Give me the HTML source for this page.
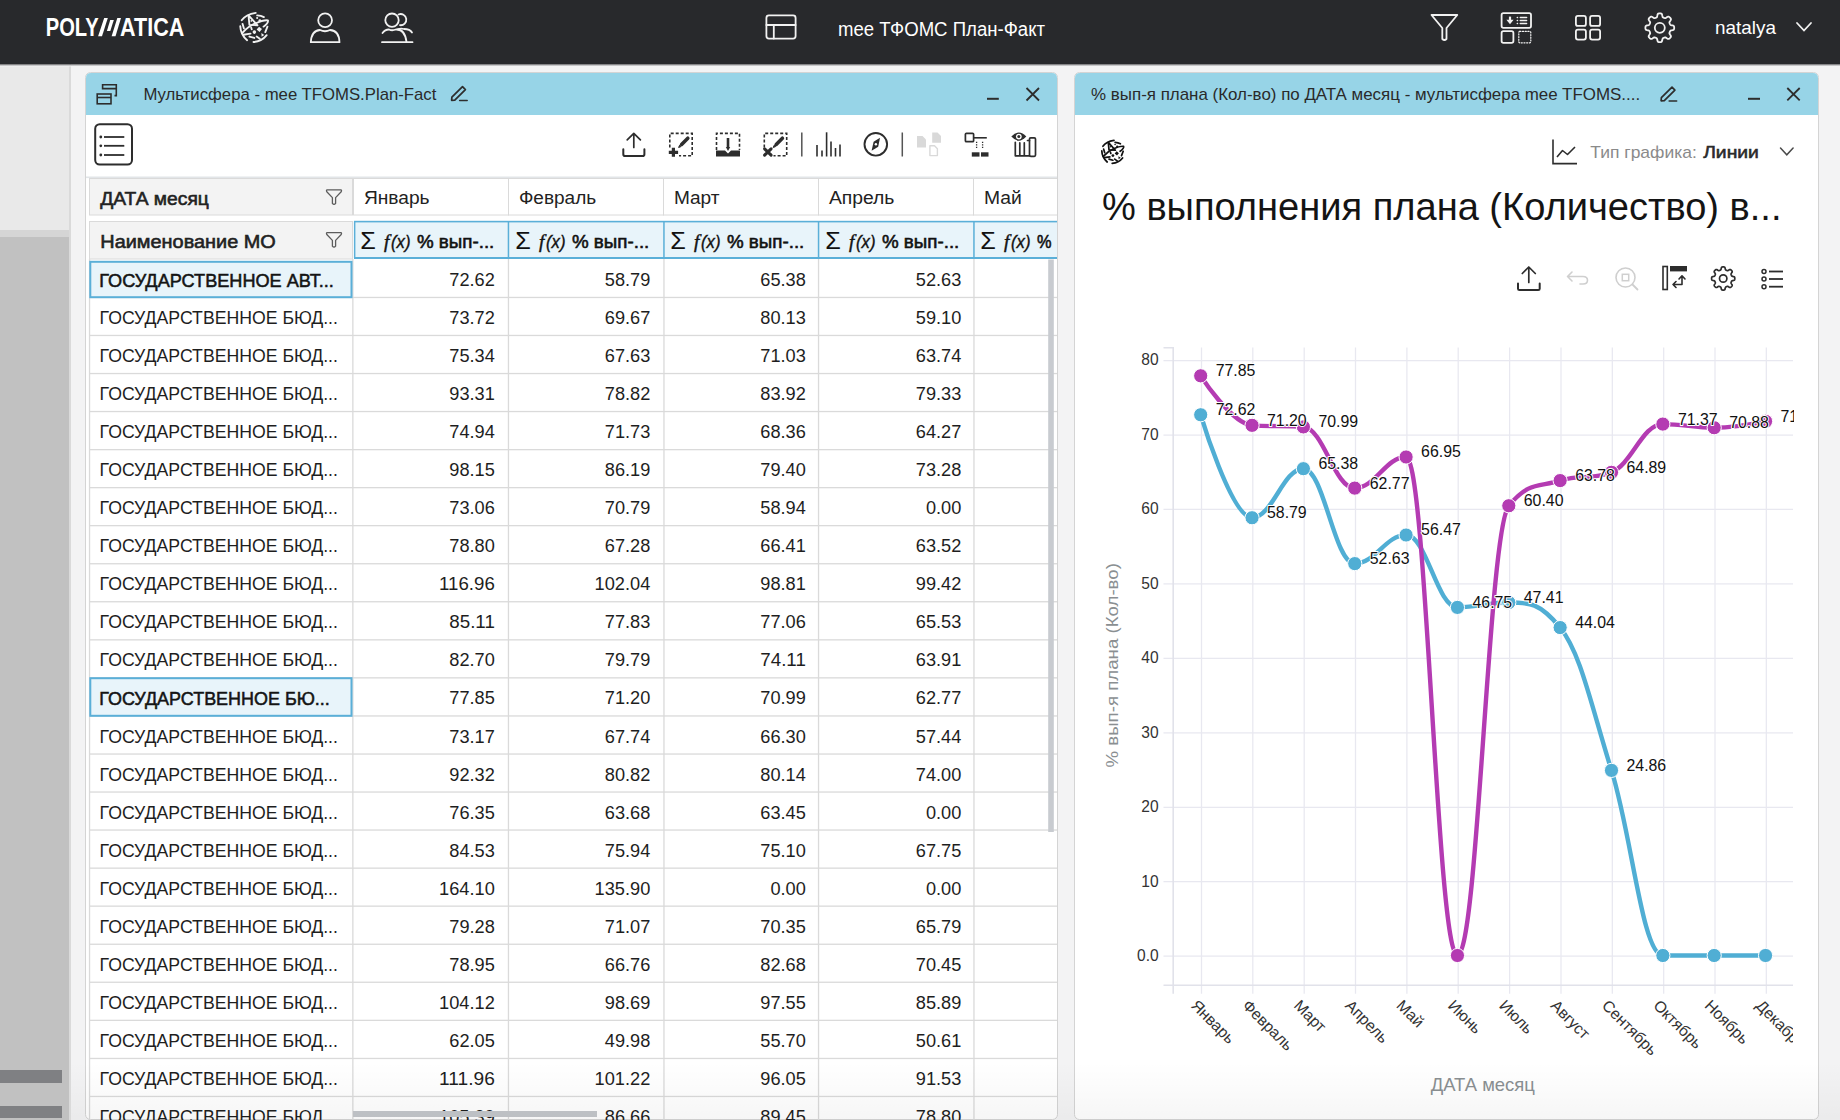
<!DOCTYPE html>
<html><head><meta charset="utf-8"><title>Polymatica</title>
<style>
html,body{margin:0;padding:0;width:1840px;height:1120px;overflow:hidden;background:#f3f3f4;}
svg{display:block;font-family:"Liberation Sans", sans-serif;}
</style></head><body>
<svg width="1840" height="1120" viewBox="0 0 1840 1120">
<defs>
<linearGradient id="topshadow" x1="0" y1="0" x2="0" y2="1"><stop offset="0" stop-color="#9a9a9c"/><stop offset="1" stop-color="#f3f3f4"/></linearGradient>
<linearGradient id="botfade" x1="0" y1="0" x2="0" y2="1"><stop offset="0" stop-color="#000" stop-opacity="0"/><stop offset="1" stop-color="#000" stop-opacity="0.035"/></linearGradient>
<clipPath id="plotclip"><rect x="1163" y="340" width="631" height="660"/></clipPath>
<clipPath id="tableclip"><rect x="86" y="170" width="971" height="100"/></clipPath>
<clipPath id="xlabclip"><rect x="1100" y="990" width="693" height="80"/></clipPath>
</defs>
<rect x="0" y="0" width="1840" height="1120" fill="#f3f3f4"/>
<rect x="0" y="64" width="69" height="166" fill="#e9e9e9"/>
<rect x="0" y="230" width="69" height="7" fill="#d5d5d5"/>
<rect x="0" y="237" width="69" height="883" fill="#c1c1c1"/>
<rect x="69" y="64" width="2" height="1056" fill="#dadada"/>
<rect x="0" y="1070" width="62" height="13" fill="#7f8083"/>
<rect x="0" y="1106" width="62" height="12" fill="#7f8083"/>
<rect x="85.5" y="72.5" width="972" height="1047" rx="5" fill="#ffffff" stroke="#d4d4d4" stroke-width="1"/>
<path d="M86,115 L86,78 Q86,73 91,73 L1052,73 Q1057,73 1057,78 L1057,115 Z" fill="#97d4e7"/>
<rect x="1074.5" y="72.5" width="744" height="1047" rx="5" fill="#ffffff" stroke="#d4d4d4" stroke-width="1"/>
<path d="M1075,115 L1075,78 Q1075,73 1080,73 L1813,73 Q1818,73 1818,78 L1818,115 Z" fill="#97d4e7"/>
<rect x="0" y="0" width="1840" height="64.6" fill="#28292c"/>
<rect x="0" y="64.6" width="1840" height="1.8" fill="url(#topshadow)"/>
<g fill="#ffffff">
<text x="45.7" y="36.3" font-size="26.6" fill="#ffffff" font-weight="bold" text-anchor="start" textLength="53.0" lengthAdjust="spacingAndGlyphs" >POLY</text>
<polygon points="98.1,36.3 102,36.3 107.8,18.1 104.2,18.1"/>
<polygon points="106.9,31 110.3,31 113.8,20 110.2,20"/>
<polygon points="111.6,36.3 115.5,36.3 121,18.1 117.3,18.1"/>
<text x="120.1" y="36.3" font-size="26.6" fill="#ffffff" font-weight="bold" text-anchor="start" textLength="64.2" lengthAdjust="spacingAndGlyphs" >ATICA</text>
</g>
<g transform="translate(239.5,12.3) scale(1.27)" stroke="#f2f2f2" fill="none" stroke-width="1.45" stroke-linecap="round" stroke-linejoin="round">
<path d="M1.7,6.3 Q5,1.5 12.8,0.4 M13.9,2.4 Q17,2.6 19.2,3.8 M0.6,10.9 Q0.8,17.5 6,22 M11,23.4 Q17.5,23 21.4,18 M22,11.3 L20.3,15.6"/>
<path d="M2.1,16.3 Q7,11 12.4,8.8 Q19,5.8 22.4,6.3 Q23,8.5 18.9,11.3"/>
<path d="M7.1,2.4 L14.2,10.2 L7.8,9.9 Z"/>
<path d="M3.1,17.7 L8.7,16.8 M2.4,9.1 L3.5,12.7 M7.8,19.1 L11.7,20.2 M13.5,19.1 L16,20.9 M9.2,12 L9.6,13.4"/>
</g>
<g transform="translate(239.5,12.3) scale(1.27)" fill="#f2f2f2">
<rect x="14.1" y="11.9" width="3" height="3" transform="rotate(40 15.6 13.4)"/>
<circle cx="11.7" cy="15.6" r="1.4"/><path d="M17.2,16.3 L19.5,17.8 L17.4,19.2 Z"/>
<circle cx="13.9" cy="4.5" r="0.8"/><circle cx="16" cy="6.6" r="1.1"/><circle cx="9.3" cy="6.8" r="0.7"/>
</g>
<g stroke="#f2f2f2" fill="none" stroke-width="1.8" stroke-linecap="round" stroke-linejoin="round">
<circle cx="325.1" cy="20.2" r="6.9"/>
<path d="M310.8,42.2 Q311.5,30.5 320,30 Q325,32.5 330,30 Q339,30.5 339.5,42.2 Z"/>
<circle cx="392" cy="20.2" r="6.7"/>
<path d="M398.5,14.5 A5.6,5.6 0 1 1 400,25.2"/>
<path d="M382.5,33 Q385,29.5 389,29.5 Q392,31 396,29.5 Q405,29 406.5,42"/>
<path d="M398,29.2 Q401,28 404,29 Q410,29 412,32.5"/>
<path d="M382,42.2 L412.5,42.2"/>
</g>
<g stroke="#f2f2f2" fill="none" stroke-width="1.8" stroke-linecap="round" stroke-linejoin="round">
<rect x="766.4" y="15.4" width="29.2" height="23.2" rx="2.5"/>
<path d="M766.4,25 L795.6,25 M773.8,25 L773.8,38.6"/>
</g>
<text x="838.0" y="35.7" font-size="20" fill="#ffffff" font-weight="normal" text-anchor="start" textLength="207.0" lengthAdjust="spacingAndGlyphs" >mee ТФОМС План-Факт</text>
<g stroke="#f2f2f2" fill="none" stroke-width="1.8" stroke-linecap="round" stroke-linejoin="round">
<path d="M1431.5,15 L1457.3,15 L1446.5,28 L1446.5,39 Q1444.4,41 1442.3,39 L1442.3,28 Z"/>
<rect x="1501.6" y="13.2" width="29.4" height="14.6" rx="1.8"/>
<rect x="1501.6" y="31.2" width="11.8" height="11.6" rx="1.8"/>
<rect x="1518.8" y="31.4" width="12" height="11.4" rx="1" stroke-width="1.2" stroke-dasharray="1.1 1.6"/>
<path d="M1520.3,17.6 L1526.6,17.6 M1520.3,20.6 L1526.6,20.6 M1520.3,23.6 L1526.6,23.6" stroke-width="1.5"/><path d="M1517.3,17.6 L1517.5,17.6 M1517.3,20.6 L1517.5,20.6 M1517.3,23.6 L1517.5,23.6" stroke-width="1.5"/>
<rect x="1575.9" y="15.9" width="10" height="10" rx="2"/>
<rect x="1590.1" y="15.9" width="10" height="10" rx="2"/>
<rect x="1575.9" y="29.6" width="10" height="10" rx="2"/>
<rect x="1590.1" y="29.6" width="10" height="10" rx="2"/>
</g>
<path d="M1510,16.6 L1510,20.5" stroke="#f2f2f2" stroke-width="2.2"/><path d="M1506.4,19.8 L1513.6,19.8 L1510,24.2 Z" fill="#f2f2f2"/>
<path d="M1659.80,13.40 L1660.18,13.41 L1660.55,13.44 L1660.93,13.50 L1661.29,13.62 L1661.64,13.84 L1661.94,14.28 L1662.17,15.00 L1662.33,15.88 L1662.49,16.61 L1662.68,17.06 L1662.91,17.31 L1663.16,17.47 L1663.41,17.60 L1663.67,17.71 L1663.93,17.82 L1664.19,17.93 L1664.46,18.03 L1664.73,18.13 L1665.02,18.19 L1665.36,18.17 L1665.81,17.99 L1666.44,17.58 L1667.17,17.07 L1667.85,16.72 L1668.37,16.63 L1668.77,16.72 L1669.11,16.89 L1669.42,17.11 L1669.71,17.36 L1669.98,17.62 L1670.24,17.89 L1670.49,18.18 L1670.71,18.49 L1670.88,18.83 L1670.97,19.23 L1670.88,19.75 L1670.53,20.43 L1670.02,21.16 L1669.61,21.79 L1669.43,22.24 L1669.41,22.58 L1669.47,22.87 L1669.57,23.14 L1669.67,23.41 L1669.78,23.67 L1669.89,23.93 L1670.00,24.19 L1670.13,24.44 L1670.29,24.69 L1670.54,24.92 L1670.99,25.11 L1671.72,25.27 L1672.60,25.43 L1673.32,25.66 L1673.76,25.96 L1673.98,26.31 L1674.10,26.67 L1674.16,27.05 L1674.19,27.42 L1674.20,27.80 L1674.19,28.18 L1674.16,28.55 L1674.10,28.93 L1673.98,29.29 L1673.76,29.64 L1673.32,29.94 L1672.60,30.17 L1671.72,30.33 L1670.99,30.49 L1670.54,30.68 L1670.29,30.91 L1670.13,31.16 L1670.00,31.41 L1669.89,31.67 L1669.78,31.93 L1669.67,32.19 L1669.57,32.46 L1669.47,32.73 L1669.41,33.02 L1669.43,33.36 L1669.61,33.81 L1670.02,34.44 L1670.53,35.17 L1670.88,35.85 L1670.97,36.37 L1670.88,36.77 L1670.71,37.11 L1670.49,37.42 L1670.24,37.71 L1669.98,37.98 L1669.71,38.24 L1669.42,38.49 L1669.11,38.71 L1668.77,38.88 L1668.37,38.97 L1667.85,38.88 L1667.17,38.53 L1666.44,38.02 L1665.81,37.61 L1665.36,37.43 L1665.02,37.41 L1664.73,37.47 L1664.46,37.57 L1664.19,37.67 L1663.93,37.78 L1663.67,37.89 L1663.41,38.00 L1663.16,38.13 L1662.91,38.29 L1662.68,38.54 L1662.49,38.99 L1662.33,39.72 L1662.17,40.60 L1661.94,41.32 L1661.64,41.76 L1661.29,41.98 L1660.93,42.10 L1660.55,42.16 L1660.18,42.19 L1659.80,42.20 L1659.42,42.19 L1659.05,42.16 L1658.67,42.10 L1658.31,41.98 L1657.96,41.76 L1657.66,41.32 L1657.43,40.60 L1657.27,39.72 L1657.11,38.99 L1656.92,38.54 L1656.69,38.29 L1656.44,38.13 L1656.19,38.00 L1655.93,37.89 L1655.67,37.78 L1655.41,37.67 L1655.14,37.57 L1654.87,37.47 L1654.58,37.41 L1654.24,37.43 L1653.79,37.61 L1653.16,38.02 L1652.43,38.53 L1651.75,38.88 L1651.23,38.97 L1650.83,38.88 L1650.49,38.71 L1650.18,38.49 L1649.89,38.24 L1649.62,37.98 L1649.36,37.71 L1649.11,37.42 L1648.89,37.11 L1648.72,36.77 L1648.63,36.37 L1648.72,35.85 L1649.07,35.17 L1649.58,34.44 L1649.99,33.81 L1650.17,33.36 L1650.19,33.02 L1650.13,32.73 L1650.03,32.46 L1649.93,32.19 L1649.82,31.93 L1649.71,31.67 L1649.60,31.41 L1649.47,31.16 L1649.31,30.91 L1649.06,30.68 L1648.61,30.49 L1647.88,30.33 L1647.00,30.17 L1646.28,29.94 L1645.84,29.64 L1645.62,29.29 L1645.50,28.93 L1645.44,28.55 L1645.41,28.18 L1645.40,27.80 L1645.41,27.42 L1645.44,27.05 L1645.50,26.67 L1645.62,26.31 L1645.84,25.96 L1646.28,25.66 L1647.00,25.43 L1647.88,25.27 L1648.61,25.11 L1649.06,24.92 L1649.31,24.69 L1649.47,24.44 L1649.60,24.19 L1649.71,23.93 L1649.82,23.67 L1649.93,23.41 L1650.03,23.14 L1650.13,22.87 L1650.19,22.58 L1650.17,22.24 L1649.99,21.79 L1649.58,21.16 L1649.07,20.43 L1648.72,19.75 L1648.63,19.23 L1648.72,18.83 L1648.89,18.49 L1649.11,18.18 L1649.36,17.89 L1649.62,17.62 L1649.89,17.36 L1650.18,17.11 L1650.49,16.89 L1650.83,16.72 L1651.23,16.63 L1651.75,16.72 L1652.43,17.07 L1653.16,17.58 L1653.79,17.99 L1654.24,18.17 L1654.58,18.19 L1654.87,18.13 L1655.14,18.03 L1655.41,17.93 L1655.67,17.82 L1655.93,17.71 L1656.19,17.60 L1656.44,17.47 L1656.69,17.31 L1656.92,17.06 L1657.11,16.61 L1657.27,15.88 L1657.43,15.00 L1657.66,14.28 L1657.96,13.84 L1658.31,13.62 L1658.67,13.50 L1659.05,13.44 L1659.42,13.41 Z" stroke="#f2f2f2" stroke-width="1.8" fill="none" stroke-linejoin="round"/>
<circle cx="1659.8" cy="27.8" r="5" stroke="#f2f2f2" stroke-width="1.8" fill="none"/>
<text x="1715.0" y="33.8" font-size="19" fill="#ffffff" font-weight="normal" text-anchor="start" textLength="61.0" lengthAdjust="spacingAndGlyphs" >natalya</text>
<path d="M1797,23 L1804,30.5 L1811,23" stroke="#f2f2f2" stroke-width="1.8" fill="none" stroke-linecap="round"/>
<g stroke="#2d2d2d" stroke-width="1.6" fill="none">
<path d="M102.6,89.6 L102.6,84.7 L116.3,84.7 L116.3,95.6 L114.5,95.6 M102.6,88.6 L116.3,88.6"/>
<rect x="97.2" y="94" width="13.8" height="9.8"/>
<path d="M97.2,97.5 L111,97.5"/>
</g>
<text x="143.4" y="100.2" font-size="17" fill="#2a2a2a" font-weight="normal" text-anchor="start" textLength="293.0" lengthAdjust="spacingAndGlyphs" >Мультисфера - mee TFOMS.Plan-Fact</text>
<g transform="translate(451,86.5)" stroke="#2d2d2d" stroke-width="1.5" fill="none" stroke-linejoin="round" stroke-linecap="round">
<path d="M0.9,10.6 L11.5,0.2 L14.4,3.1 L3.8,13.6 L0.6,13.8 Z" stroke-width="1.7"/>
<path d="M8.6,13.9 L16.2,13.9" stroke-width="1.5"/>
</g>
<path d="M987,98.8 L998.8,98.8" stroke="#2d2d2d" stroke-width="2"/>
<path d="M1026.5,88 L1039,100.5 M1039,88 L1026.5,100.5" stroke="#2d2d2d" stroke-width="1.8"/>
<rect x="95.2" y="124.2" width="36.8" height="40.3" rx="4.5" stroke="#2d2d2d" stroke-width="2" fill="none"/>
<circle cx="100.8" cy="137" r="1.4" fill="#2d2d2d"/>
<path d="M104,137 L124.3,137" stroke="#2d2d2d" stroke-width="1.8"/>
<circle cx="100.8" cy="145.8" r="1.4" fill="#2d2d2d"/>
<path d="M104,145.8 L124.3,145.8" stroke="#2d2d2d" stroke-width="1.8"/>
<circle cx="100.8" cy="155" r="1.4" fill="#2d2d2d"/>
<path d="M104,155 L124.3,155" stroke="#2d2d2d" stroke-width="1.8"/>
<path d="M633.8,133.5 L633.8,147.5 M627.2,139.8 L633.8,133.3 L640.4,139.8" stroke="#2d2d2d" stroke-width="1.7" fill="none" stroke-linecap="round" stroke-linejoin="round"/>
<path d="M623.3,149.2 L623.3,154.2 Q623.3,156 625,156 L642.7,156 Q644.4,156 644.4,154.2 L644.4,149.2" stroke="#2d2d2d" stroke-width="2" fill="none" stroke-linecap="round"/>
<path d="M669.8,147.5 L669.8,133.4 L692.2,133.4 L692.2,155.8 L679,155.8" stroke="#2d2d2d" stroke-width="1.6" fill="none" stroke-dasharray="3 2"/>
<path d="M673.4,147.7 L673.4,156.8 M668.8,152.3 L678.1,152.3" stroke="#2d2d2d" stroke-width="3.2"/>
<path d="M687.8,138.2 L681.6,144.4" stroke="#2d2d2d" stroke-width="3.6" stroke-linecap="round"/>
<path d="M679.6,145.2 L678.6,147.5 L681,146.6 Z" fill="#2d2d2d" stroke="#2d2d2d" stroke-width="1"/>
<path d="M716.5,150 L716.5,133.4 L739.5,133.4 L739.5,150" stroke="#2d2d2d" stroke-width="1.6" fill="none" stroke-dasharray="3 2"/>
<path d="M716,150.5 L725,150.5 L728,153.5 L731,150.5 L740,150.5 L740,156.6 L716,156.6 Z" fill="#2d2d2d"/>
<path d="M728,138 L728,147" stroke="#2d2d2d" stroke-width="2.6"/>
<path d="M725.8,147 L730.2,147 L728,151 Z" fill="#2d2d2d"/>
<path d="M764.3,147.5 L764.3,133.4 L786.7,133.4 L786.7,155.8 L773.5,155.8" stroke="#2d2d2d" stroke-width="1.6" fill="none" stroke-dasharray="3 2"/>
<path d="M764.6,148.9 L771.1,155.2 M771.1,148.9 L764.6,155.2" stroke="#2d2d2d" stroke-width="3.1" stroke-linecap="round"/>
<path d="M782.4,138.2 L776.2,144.4" stroke="#2d2d2d" stroke-width="3.6" stroke-linecap="round"/>
<path d="M774.2,145.2 L773.2,147.5 L775.6,146.6 Z" fill="#2d2d2d" stroke="#2d2d2d" stroke-width="1"/>
<path d="M801.8,132.5 L801.8,156.5 M902.3,132.5 L902.3,156.5" stroke="#555" stroke-width="1.5"/>
<path d="M817,145 L817,156.5" stroke="#2d2d2d" stroke-width="1.6"/>
<path d="M822,150.5 L822,156.5" stroke="#2d2d2d" stroke-width="1.6"/>
<path d="M826.6,132.3 L826.6,156.5" stroke="#2d2d2d" stroke-width="1.6"/>
<path d="M831,141.5 L831,156.5" stroke="#2d2d2d" stroke-width="1.6"/>
<path d="M835.5,148 L835.5,156.5" stroke="#2d2d2d" stroke-width="1.6"/>
<path d="M840,144.5 L840,156.5" stroke="#2d2d2d" stroke-width="1.6"/>
<circle cx="875.8" cy="144.3" r="11.3" stroke="#2d2d2d" stroke-width="1.9" fill="none"/>
<path d="M880,137.8 L878.2,146.8 L871.6,150.8 L873.6,141.8 Z" fill="#2d2d2d"/>
<circle cx="875.9" cy="144.3" r="1.2" fill="#fff"/>
<path d="M917,136 L922.5,136 L926,139.5 L926,147.4 L917,147.4 Z" fill="#d9d9d9"/>
<path d="M932.2,132.5 L937.5,132.5 L941,136 L941,142.7 L932.2,142.7 Z" fill="#d9d9d9"/>
<path d="M929.9,145.8 L934.5,145.8 L937.4,148.7 L937.4,155.6 L929.9,155.6 Z" stroke="#d9d9d9" stroke-width="1.4" fill="none" stroke-linejoin="round"/>
<rect x="965.4" y="133.3" width="8.2" height="8.4" rx="1" stroke="#2d2d2d" stroke-width="1.7" fill="none" stroke-linecap="round" stroke-linejoin="round"/>
<path d="M974,137.8 L986.8,137.8" stroke="#2d2d2d" stroke-width="1.6"/>
<path d="M976.6,141.8 L976.6,149.3 M982.6,141.8 L982.6,149.3" stroke="#2d2d2d" stroke-width="1.3" stroke-dasharray="1.3 1.2"/>
<rect x="971.8" y="152.3" width="7.7" height="4.3" fill="#2d2d2d"/>
<rect x="981" y="152.3" width="7.5" height="4.3" fill="#2d2d2d"/>
<path d="M1011.3,136.6 Q1018.8,128.3 1026.3,136.6 Q1018.8,144.9 1011.3,136.6 Z" fill="#2d2d2d"/>
<circle cx="1018.8" cy="136.6" r="2.9" fill="#fff"/>
<circle cx="1018.8" cy="136.6" r="1.5" fill="#2d2d2d"/>
<path d="M1015.3,142.3 L1015.3,155.8 L1029.5,155.8 M1019.8,142.8 L1019.8,155.8 M1024.3,142.8 L1024.3,155.8 M1027.5,140.5 L1029.5,140.5" stroke="#2d2d2d" stroke-width="1.7" fill="none" stroke-linecap="round" stroke-linejoin="round"/>
<rect x="1029.5" y="137.8" width="6" height="18.5" rx="1.2" stroke="#2d2d2d" stroke-width="1.7" fill="none" stroke-linecap="round" stroke-linejoin="round"/>
<rect x="86" y="176.5" width="971" height="1.6" fill="#e2e5e8"/>
<rect x="89.5" y="178.5" width="263" height="36.5" fill="#f3f3f3" stroke="#dadada"/>
<rect x="89.5" y="221.5" width="263" height="37.5" fill="#f3f3f3" stroke="#dadada"/>
<g clip-path="url(#tableclip)">
<rect x="353.5" y="178.5" width="155.0" height="36.5" fill="#fff" stroke="#dadada"/>
<rect x="508.5" y="178.5" width="155.0" height="36.5" fill="#fff" stroke="#dadada"/>
<rect x="663.5" y="178.5" width="155.0" height="36.5" fill="#fff" stroke="#dadada"/>
<rect x="818.5" y="178.5" width="155.0" height="36.5" fill="#fff" stroke="#dadada"/>
<rect x="973.5" y="178.5" width="156.5" height="36.5" fill="#fff" stroke="#dadada"/>
<rect x="354" y="221" width="776" height="37.5" fill="#e8f4fa"/>
<rect x="354" y="220.8" width="776" height="1.6" fill="#5aafd8"/>
<rect x="354" y="257" width="776" height="2" fill="#5aafd8"/>
<rect x="353.9" y="221" width="1.5" height="37" fill="#5aafd8"/>
<rect x="507.7" y="221" width="1.5" height="37" fill="#5aafd8"/>
<rect x="663.2" y="221" width="1.5" height="37" fill="#5aafd8"/>
<rect x="817.8" y="221" width="1.5" height="37" fill="#5aafd8"/>
<rect x="973.2" y="221" width="1.5" height="37" fill="#5aafd8"/>
</g>
<rect x="89" y="296.8" width="968" height="1.3" fill="#dadada"/>
<rect x="89" y="334.8" width="968" height="1.3" fill="#dadada"/>
<rect x="89" y="372.9" width="968" height="1.3" fill="#dadada"/>
<rect x="89" y="410.9" width="968" height="1.3" fill="#dadada"/>
<rect x="89" y="449.0" width="968" height="1.3" fill="#dadada"/>
<rect x="89" y="487.0" width="968" height="1.3" fill="#dadada"/>
<rect x="89" y="525.0" width="968" height="1.3" fill="#dadada"/>
<rect x="89" y="563.1" width="968" height="1.3" fill="#dadada"/>
<rect x="89" y="601.1" width="968" height="1.3" fill="#dadada"/>
<rect x="89" y="639.2" width="968" height="1.3" fill="#dadada"/>
<rect x="89" y="677.2" width="968" height="1.3" fill="#dadada"/>
<rect x="89" y="715.3" width="968" height="1.3" fill="#dadada"/>
<rect x="89" y="753.4" width="968" height="1.3" fill="#dadada"/>
<rect x="89" y="791.4" width="968" height="1.3" fill="#dadada"/>
<rect x="89" y="829.4" width="968" height="1.3" fill="#dadada"/>
<rect x="89" y="867.5" width="968" height="1.3" fill="#dadada"/>
<rect x="89" y="905.5" width="968" height="1.3" fill="#dadada"/>
<rect x="89" y="943.6" width="968" height="1.3" fill="#dadada"/>
<rect x="89" y="981.6" width="968" height="1.3" fill="#dadada"/>
<rect x="89" y="1019.7" width="968" height="1.3" fill="#dadada"/>
<rect x="89" y="1057.8" width="968" height="1.3" fill="#dadada"/>
<rect x="89" y="1095.8" width="968" height="1.3" fill="#dadada"/>
<rect x="89" y="1133.8" width="968" height="1.3" fill="#dadada"/>
<rect x="88.9" y="259" width="1.3" height="861" fill="#dadada"/>
<rect x="352.2" y="259" width="1.3" height="861" fill="#dadada"/>
<rect x="507.8" y="259" width="1.3" height="861" fill="#dadada"/>
<rect x="663.3" y="259" width="1.3" height="861" fill="#dadada"/>
<rect x="817.9" y="259" width="1.3" height="861" fill="#dadada"/>
<rect x="973.3" y="259" width="1.3" height="861" fill="#dadada"/>
<rect x="90.3" y="261.8" width="261.2" height="35.4" fill="#e8f4fa" stroke="#5aafd8" stroke-width="2"/>
<rect x="90.3" y="678.2" width="261.2" height="37.6" fill="#e8f4fa" stroke="#5aafd8" stroke-width="2"/>
<text x="99.3" y="287.0" font-size="19.2" fill="#141414" font-weight="normal" text-anchor="start" textLength="234.5" lengthAdjust="spacingAndGlyphs"  stroke="#141414" stroke-width="0.55">ГОСУДАРСТВЕННОЕ АВТ...</text>
<text x="494.8" y="285.9" font-size="18.3" fill="#1e1e1e" font-weight="normal" text-anchor="end" textLength="45.5" lengthAdjust="spacingAndGlyphs" >72.62</text>
<text x="650.3" y="285.9" font-size="18.3" fill="#1e1e1e" font-weight="normal" text-anchor="end" textLength="45.5" lengthAdjust="spacingAndGlyphs" >58.79</text>
<text x="805.8" y="285.9" font-size="18.3" fill="#1e1e1e" font-weight="normal" text-anchor="end" textLength="45.5" lengthAdjust="spacingAndGlyphs" >65.38</text>
<text x="961.3" y="285.9" font-size="18.3" fill="#1e1e1e" font-weight="normal" text-anchor="end" textLength="45.5" lengthAdjust="spacingAndGlyphs" >52.63</text>
<text x="99.6" y="324.0" font-size="18.3" fill="#1e1e1e" font-weight="normal" text-anchor="start" textLength="238.3" lengthAdjust="spacingAndGlyphs" >ГОСУДАРСТВЕННОЕ БЮД...</text>
<text x="494.8" y="324.0" font-size="18.3" fill="#1e1e1e" font-weight="normal" text-anchor="end" textLength="45.5" lengthAdjust="spacingAndGlyphs" >73.72</text>
<text x="650.3" y="324.0" font-size="18.3" fill="#1e1e1e" font-weight="normal" text-anchor="end" textLength="45.5" lengthAdjust="spacingAndGlyphs" >69.67</text>
<text x="805.8" y="324.0" font-size="18.3" fill="#1e1e1e" font-weight="normal" text-anchor="end" textLength="45.5" lengthAdjust="spacingAndGlyphs" >80.13</text>
<text x="961.3" y="324.0" font-size="18.3" fill="#1e1e1e" font-weight="normal" text-anchor="end" textLength="45.5" lengthAdjust="spacingAndGlyphs" >59.10</text>
<text x="99.6" y="362.0" font-size="18.3" fill="#1e1e1e" font-weight="normal" text-anchor="start" textLength="238.3" lengthAdjust="spacingAndGlyphs" >ГОСУДАРСТВЕННОЕ БЮД...</text>
<text x="494.8" y="362.0" font-size="18.3" fill="#1e1e1e" font-weight="normal" text-anchor="end" textLength="45.5" lengthAdjust="spacingAndGlyphs" >75.34</text>
<text x="650.3" y="362.0" font-size="18.3" fill="#1e1e1e" font-weight="normal" text-anchor="end" textLength="45.5" lengthAdjust="spacingAndGlyphs" >67.63</text>
<text x="805.8" y="362.0" font-size="18.3" fill="#1e1e1e" font-weight="normal" text-anchor="end" textLength="45.5" lengthAdjust="spacingAndGlyphs" >71.03</text>
<text x="961.3" y="362.0" font-size="18.3" fill="#1e1e1e" font-weight="normal" text-anchor="end" textLength="45.5" lengthAdjust="spacingAndGlyphs" >63.74</text>
<text x="99.6" y="400.1" font-size="18.3" fill="#1e1e1e" font-weight="normal" text-anchor="start" textLength="238.3" lengthAdjust="spacingAndGlyphs" >ГОСУДАРСТВЕННОЕ БЮД...</text>
<text x="494.8" y="400.1" font-size="18.3" fill="#1e1e1e" font-weight="normal" text-anchor="end" textLength="45.5" lengthAdjust="spacingAndGlyphs" >93.31</text>
<text x="650.3" y="400.1" font-size="18.3" fill="#1e1e1e" font-weight="normal" text-anchor="end" textLength="45.5" lengthAdjust="spacingAndGlyphs" >78.82</text>
<text x="805.8" y="400.1" font-size="18.3" fill="#1e1e1e" font-weight="normal" text-anchor="end" textLength="45.5" lengthAdjust="spacingAndGlyphs" >83.92</text>
<text x="961.3" y="400.1" font-size="18.3" fill="#1e1e1e" font-weight="normal" text-anchor="end" textLength="45.5" lengthAdjust="spacingAndGlyphs" >79.33</text>
<text x="99.6" y="438.1" font-size="18.3" fill="#1e1e1e" font-weight="normal" text-anchor="start" textLength="238.3" lengthAdjust="spacingAndGlyphs" >ГОСУДАРСТВЕННОЕ БЮД...</text>
<text x="494.8" y="438.1" font-size="18.3" fill="#1e1e1e" font-weight="normal" text-anchor="end" textLength="45.5" lengthAdjust="spacingAndGlyphs" >74.94</text>
<text x="650.3" y="438.1" font-size="18.3" fill="#1e1e1e" font-weight="normal" text-anchor="end" textLength="45.5" lengthAdjust="spacingAndGlyphs" >71.73</text>
<text x="805.8" y="438.1" font-size="18.3" fill="#1e1e1e" font-weight="normal" text-anchor="end" textLength="45.5" lengthAdjust="spacingAndGlyphs" >68.36</text>
<text x="961.3" y="438.1" font-size="18.3" fill="#1e1e1e" font-weight="normal" text-anchor="end" textLength="45.5" lengthAdjust="spacingAndGlyphs" >64.27</text>
<text x="99.6" y="476.2" font-size="18.3" fill="#1e1e1e" font-weight="normal" text-anchor="start" textLength="238.3" lengthAdjust="spacingAndGlyphs" >ГОСУДАРСТВЕННОЕ БЮД...</text>
<text x="494.8" y="476.2" font-size="18.3" fill="#1e1e1e" font-weight="normal" text-anchor="end" textLength="45.5" lengthAdjust="spacingAndGlyphs" >98.15</text>
<text x="650.3" y="476.2" font-size="18.3" fill="#1e1e1e" font-weight="normal" text-anchor="end" textLength="45.5" lengthAdjust="spacingAndGlyphs" >86.19</text>
<text x="805.8" y="476.2" font-size="18.3" fill="#1e1e1e" font-weight="normal" text-anchor="end" textLength="45.5" lengthAdjust="spacingAndGlyphs" >79.40</text>
<text x="961.3" y="476.2" font-size="18.3" fill="#1e1e1e" font-weight="normal" text-anchor="end" textLength="45.5" lengthAdjust="spacingAndGlyphs" >73.28</text>
<text x="99.6" y="514.2" font-size="18.3" fill="#1e1e1e" font-weight="normal" text-anchor="start" textLength="238.3" lengthAdjust="spacingAndGlyphs" >ГОСУДАРСТВЕННОЕ БЮД...</text>
<text x="494.8" y="514.2" font-size="18.3" fill="#1e1e1e" font-weight="normal" text-anchor="end" textLength="45.5" lengthAdjust="spacingAndGlyphs" >73.06</text>
<text x="650.3" y="514.2" font-size="18.3" fill="#1e1e1e" font-weight="normal" text-anchor="end" textLength="45.5" lengthAdjust="spacingAndGlyphs" >70.79</text>
<text x="805.8" y="514.2" font-size="18.3" fill="#1e1e1e" font-weight="normal" text-anchor="end" textLength="45.5" lengthAdjust="spacingAndGlyphs" >58.94</text>
<text x="961.3" y="514.2" font-size="18.3" fill="#1e1e1e" font-weight="normal" text-anchor="end" textLength="35.4" lengthAdjust="spacingAndGlyphs" >0.00</text>
<text x="99.6" y="552.2" font-size="18.3" fill="#1e1e1e" font-weight="normal" text-anchor="start" textLength="238.3" lengthAdjust="spacingAndGlyphs" >ГОСУДАРСТВЕННОЕ БЮД...</text>
<text x="494.8" y="552.2" font-size="18.3" fill="#1e1e1e" font-weight="normal" text-anchor="end" textLength="45.5" lengthAdjust="spacingAndGlyphs" >78.80</text>
<text x="650.3" y="552.2" font-size="18.3" fill="#1e1e1e" font-weight="normal" text-anchor="end" textLength="45.5" lengthAdjust="spacingAndGlyphs" >67.28</text>
<text x="805.8" y="552.2" font-size="18.3" fill="#1e1e1e" font-weight="normal" text-anchor="end" textLength="45.5" lengthAdjust="spacingAndGlyphs" >66.41</text>
<text x="961.3" y="552.2" font-size="18.3" fill="#1e1e1e" font-weight="normal" text-anchor="end" textLength="45.5" lengthAdjust="spacingAndGlyphs" >63.52</text>
<text x="99.6" y="590.3" font-size="18.3" fill="#1e1e1e" font-weight="normal" text-anchor="start" textLength="238.3" lengthAdjust="spacingAndGlyphs" >ГОСУДАРСТВЕННОЕ БЮД...</text>
<text x="494.8" y="590.3" font-size="18.3" fill="#1e1e1e" font-weight="normal" text-anchor="end" textLength="55.7" lengthAdjust="spacingAndGlyphs" >116.96</text>
<text x="650.3" y="590.3" font-size="18.3" fill="#1e1e1e" font-weight="normal" text-anchor="end" textLength="55.7" lengthAdjust="spacingAndGlyphs" >102.04</text>
<text x="805.8" y="590.3" font-size="18.3" fill="#1e1e1e" font-weight="normal" text-anchor="end" textLength="45.5" lengthAdjust="spacingAndGlyphs" >98.81</text>
<text x="961.3" y="590.3" font-size="18.3" fill="#1e1e1e" font-weight="normal" text-anchor="end" textLength="45.5" lengthAdjust="spacingAndGlyphs" >99.42</text>
<text x="99.6" y="628.3" font-size="18.3" fill="#1e1e1e" font-weight="normal" text-anchor="start" textLength="238.3" lengthAdjust="spacingAndGlyphs" >ГОСУДАРСТВЕННОЕ БЮД...</text>
<text x="494.8" y="628.3" font-size="18.3" fill="#1e1e1e" font-weight="normal" text-anchor="end" textLength="45.5" lengthAdjust="spacingAndGlyphs" >85.11</text>
<text x="650.3" y="628.3" font-size="18.3" fill="#1e1e1e" font-weight="normal" text-anchor="end" textLength="45.5" lengthAdjust="spacingAndGlyphs" >77.83</text>
<text x="805.8" y="628.3" font-size="18.3" fill="#1e1e1e" font-weight="normal" text-anchor="end" textLength="45.5" lengthAdjust="spacingAndGlyphs" >77.06</text>
<text x="961.3" y="628.3" font-size="18.3" fill="#1e1e1e" font-weight="normal" text-anchor="end" textLength="45.5" lengthAdjust="spacingAndGlyphs" >65.53</text>
<text x="99.6" y="666.4" font-size="18.3" fill="#1e1e1e" font-weight="normal" text-anchor="start" textLength="238.3" lengthAdjust="spacingAndGlyphs" >ГОСУДАРСТВЕННОЕ БЮД...</text>
<text x="494.8" y="666.4" font-size="18.3" fill="#1e1e1e" font-weight="normal" text-anchor="end" textLength="45.5" lengthAdjust="spacingAndGlyphs" >82.70</text>
<text x="650.3" y="666.4" font-size="18.3" fill="#1e1e1e" font-weight="normal" text-anchor="end" textLength="45.5" lengthAdjust="spacingAndGlyphs" >79.79</text>
<text x="805.8" y="666.4" font-size="18.3" fill="#1e1e1e" font-weight="normal" text-anchor="end" textLength="45.5" lengthAdjust="spacingAndGlyphs" >74.11</text>
<text x="961.3" y="666.4" font-size="18.3" fill="#1e1e1e" font-weight="normal" text-anchor="end" textLength="45.5" lengthAdjust="spacingAndGlyphs" >63.91</text>
<text x="99.3" y="704.7" font-size="19.2" fill="#141414" font-weight="normal" text-anchor="start" textLength="230.5" lengthAdjust="spacingAndGlyphs"  stroke="#141414" stroke-width="0.55">ГОСУДАРСТВЕННОЕ БЮ...</text>
<text x="494.8" y="704.4" font-size="18.3" fill="#1e1e1e" font-weight="normal" text-anchor="end" textLength="45.5" lengthAdjust="spacingAndGlyphs" >77.85</text>
<text x="650.3" y="704.4" font-size="18.3" fill="#1e1e1e" font-weight="normal" text-anchor="end" textLength="45.5" lengthAdjust="spacingAndGlyphs" >71.20</text>
<text x="805.8" y="704.4" font-size="18.3" fill="#1e1e1e" font-weight="normal" text-anchor="end" textLength="45.5" lengthAdjust="spacingAndGlyphs" >70.99</text>
<text x="961.3" y="704.4" font-size="18.3" fill="#1e1e1e" font-weight="normal" text-anchor="end" textLength="45.5" lengthAdjust="spacingAndGlyphs" >62.77</text>
<text x="99.6" y="742.5" font-size="18.3" fill="#1e1e1e" font-weight="normal" text-anchor="start" textLength="238.3" lengthAdjust="spacingAndGlyphs" >ГОСУДАРСТВЕННОЕ БЮД...</text>
<text x="494.8" y="742.5" font-size="18.3" fill="#1e1e1e" font-weight="normal" text-anchor="end" textLength="45.5" lengthAdjust="spacingAndGlyphs" >73.17</text>
<text x="650.3" y="742.5" font-size="18.3" fill="#1e1e1e" font-weight="normal" text-anchor="end" textLength="45.5" lengthAdjust="spacingAndGlyphs" >67.74</text>
<text x="805.8" y="742.5" font-size="18.3" fill="#1e1e1e" font-weight="normal" text-anchor="end" textLength="45.5" lengthAdjust="spacingAndGlyphs" >66.30</text>
<text x="961.3" y="742.5" font-size="18.3" fill="#1e1e1e" font-weight="normal" text-anchor="end" textLength="45.5" lengthAdjust="spacingAndGlyphs" >57.44</text>
<text x="99.6" y="780.5" font-size="18.3" fill="#1e1e1e" font-weight="normal" text-anchor="start" textLength="238.3" lengthAdjust="spacingAndGlyphs" >ГОСУДАРСТВЕННОЕ БЮД...</text>
<text x="494.8" y="780.5" font-size="18.3" fill="#1e1e1e" font-weight="normal" text-anchor="end" textLength="45.5" lengthAdjust="spacingAndGlyphs" >92.32</text>
<text x="650.3" y="780.5" font-size="18.3" fill="#1e1e1e" font-weight="normal" text-anchor="end" textLength="45.5" lengthAdjust="spacingAndGlyphs" >80.82</text>
<text x="805.8" y="780.5" font-size="18.3" fill="#1e1e1e" font-weight="normal" text-anchor="end" textLength="45.5" lengthAdjust="spacingAndGlyphs" >80.14</text>
<text x="961.3" y="780.5" font-size="18.3" fill="#1e1e1e" font-weight="normal" text-anchor="end" textLength="45.5" lengthAdjust="spacingAndGlyphs" >74.00</text>
<text x="99.6" y="818.6" font-size="18.3" fill="#1e1e1e" font-weight="normal" text-anchor="start" textLength="238.3" lengthAdjust="spacingAndGlyphs" >ГОСУДАРСТВЕННОЕ БЮД...</text>
<text x="494.8" y="818.6" font-size="18.3" fill="#1e1e1e" font-weight="normal" text-anchor="end" textLength="45.5" lengthAdjust="spacingAndGlyphs" >76.35</text>
<text x="650.3" y="818.6" font-size="18.3" fill="#1e1e1e" font-weight="normal" text-anchor="end" textLength="45.5" lengthAdjust="spacingAndGlyphs" >63.68</text>
<text x="805.8" y="818.6" font-size="18.3" fill="#1e1e1e" font-weight="normal" text-anchor="end" textLength="45.5" lengthAdjust="spacingAndGlyphs" >63.45</text>
<text x="961.3" y="818.6" font-size="18.3" fill="#1e1e1e" font-weight="normal" text-anchor="end" textLength="35.4" lengthAdjust="spacingAndGlyphs" >0.00</text>
<text x="99.6" y="856.6" font-size="18.3" fill="#1e1e1e" font-weight="normal" text-anchor="start" textLength="238.3" lengthAdjust="spacingAndGlyphs" >ГОСУДАРСТВЕННОЕ БЮД...</text>
<text x="494.8" y="856.6" font-size="18.3" fill="#1e1e1e" font-weight="normal" text-anchor="end" textLength="45.5" lengthAdjust="spacingAndGlyphs" >84.53</text>
<text x="650.3" y="856.6" font-size="18.3" fill="#1e1e1e" font-weight="normal" text-anchor="end" textLength="45.5" lengthAdjust="spacingAndGlyphs" >75.94</text>
<text x="805.8" y="856.6" font-size="18.3" fill="#1e1e1e" font-weight="normal" text-anchor="end" textLength="45.5" lengthAdjust="spacingAndGlyphs" >75.10</text>
<text x="961.3" y="856.6" font-size="18.3" fill="#1e1e1e" font-weight="normal" text-anchor="end" textLength="45.5" lengthAdjust="spacingAndGlyphs" >67.75</text>
<text x="99.6" y="894.7" font-size="18.3" fill="#1e1e1e" font-weight="normal" text-anchor="start" textLength="238.3" lengthAdjust="spacingAndGlyphs" >ГОСУДАРСТВЕННОЕ БЮД...</text>
<text x="494.8" y="894.7" font-size="18.3" fill="#1e1e1e" font-weight="normal" text-anchor="end" textLength="55.7" lengthAdjust="spacingAndGlyphs" >164.10</text>
<text x="650.3" y="894.7" font-size="18.3" fill="#1e1e1e" font-weight="normal" text-anchor="end" textLength="55.7" lengthAdjust="spacingAndGlyphs" >135.90</text>
<text x="805.8" y="894.7" font-size="18.3" fill="#1e1e1e" font-weight="normal" text-anchor="end" textLength="35.4" lengthAdjust="spacingAndGlyphs" >0.00</text>
<text x="961.3" y="894.7" font-size="18.3" fill="#1e1e1e" font-weight="normal" text-anchor="end" textLength="35.4" lengthAdjust="spacingAndGlyphs" >0.00</text>
<text x="99.6" y="932.7" font-size="18.3" fill="#1e1e1e" font-weight="normal" text-anchor="start" textLength="238.3" lengthAdjust="spacingAndGlyphs" >ГОСУДАРСТВЕННОЕ БЮД...</text>
<text x="494.8" y="932.7" font-size="18.3" fill="#1e1e1e" font-weight="normal" text-anchor="end" textLength="45.5" lengthAdjust="spacingAndGlyphs" >79.28</text>
<text x="650.3" y="932.7" font-size="18.3" fill="#1e1e1e" font-weight="normal" text-anchor="end" textLength="45.5" lengthAdjust="spacingAndGlyphs" >71.07</text>
<text x="805.8" y="932.7" font-size="18.3" fill="#1e1e1e" font-weight="normal" text-anchor="end" textLength="45.5" lengthAdjust="spacingAndGlyphs" >70.35</text>
<text x="961.3" y="932.7" font-size="18.3" fill="#1e1e1e" font-weight="normal" text-anchor="end" textLength="45.5" lengthAdjust="spacingAndGlyphs" >65.79</text>
<text x="99.6" y="970.8" font-size="18.3" fill="#1e1e1e" font-weight="normal" text-anchor="start" textLength="238.3" lengthAdjust="spacingAndGlyphs" >ГОСУДАРСТВЕННОЕ БЮД...</text>
<text x="494.8" y="970.8" font-size="18.3" fill="#1e1e1e" font-weight="normal" text-anchor="end" textLength="45.5" lengthAdjust="spacingAndGlyphs" >78.95</text>
<text x="650.3" y="970.8" font-size="18.3" fill="#1e1e1e" font-weight="normal" text-anchor="end" textLength="45.5" lengthAdjust="spacingAndGlyphs" >66.76</text>
<text x="805.8" y="970.8" font-size="18.3" fill="#1e1e1e" font-weight="normal" text-anchor="end" textLength="45.5" lengthAdjust="spacingAndGlyphs" >82.68</text>
<text x="961.3" y="970.8" font-size="18.3" fill="#1e1e1e" font-weight="normal" text-anchor="end" textLength="45.5" lengthAdjust="spacingAndGlyphs" >70.45</text>
<text x="99.6" y="1008.8" font-size="18.3" fill="#1e1e1e" font-weight="normal" text-anchor="start" textLength="238.3" lengthAdjust="spacingAndGlyphs" >ГОСУДАРСТВЕННОЕ БЮД...</text>
<text x="494.8" y="1008.8" font-size="18.3" fill="#1e1e1e" font-weight="normal" text-anchor="end" textLength="55.7" lengthAdjust="spacingAndGlyphs" >104.12</text>
<text x="650.3" y="1008.8" font-size="18.3" fill="#1e1e1e" font-weight="normal" text-anchor="end" textLength="45.5" lengthAdjust="spacingAndGlyphs" >98.69</text>
<text x="805.8" y="1008.8" font-size="18.3" fill="#1e1e1e" font-weight="normal" text-anchor="end" textLength="45.5" lengthAdjust="spacingAndGlyphs" >97.55</text>
<text x="961.3" y="1008.8" font-size="18.3" fill="#1e1e1e" font-weight="normal" text-anchor="end" textLength="45.5" lengthAdjust="spacingAndGlyphs" >85.89</text>
<text x="99.6" y="1046.9" font-size="18.3" fill="#1e1e1e" font-weight="normal" text-anchor="start" textLength="238.3" lengthAdjust="spacingAndGlyphs" >ГОСУДАРСТВЕННОЕ БЮД...</text>
<text x="494.8" y="1046.9" font-size="18.3" fill="#1e1e1e" font-weight="normal" text-anchor="end" textLength="45.5" lengthAdjust="spacingAndGlyphs" >62.05</text>
<text x="650.3" y="1046.9" font-size="18.3" fill="#1e1e1e" font-weight="normal" text-anchor="end" textLength="45.5" lengthAdjust="spacingAndGlyphs" >49.98</text>
<text x="805.8" y="1046.9" font-size="18.3" fill="#1e1e1e" font-weight="normal" text-anchor="end" textLength="45.5" lengthAdjust="spacingAndGlyphs" >55.70</text>
<text x="961.3" y="1046.9" font-size="18.3" fill="#1e1e1e" font-weight="normal" text-anchor="end" textLength="45.5" lengthAdjust="spacingAndGlyphs" >50.61</text>
<text x="99.6" y="1085.0" font-size="18.3" fill="#1e1e1e" font-weight="normal" text-anchor="start" textLength="238.3" lengthAdjust="spacingAndGlyphs" >ГОСУДАРСТВЕННОЕ БЮД...</text>
<text x="494.8" y="1085.0" font-size="18.3" fill="#1e1e1e" font-weight="normal" text-anchor="end" textLength="55.7" lengthAdjust="spacingAndGlyphs" >111.96</text>
<text x="650.3" y="1085.0" font-size="18.3" fill="#1e1e1e" font-weight="normal" text-anchor="end" textLength="55.7" lengthAdjust="spacingAndGlyphs" >101.22</text>
<text x="805.8" y="1085.0" font-size="18.3" fill="#1e1e1e" font-weight="normal" text-anchor="end" textLength="45.5" lengthAdjust="spacingAndGlyphs" >96.05</text>
<text x="961.3" y="1085.0" font-size="18.3" fill="#1e1e1e" font-weight="normal" text-anchor="end" textLength="45.5" lengthAdjust="spacingAndGlyphs" >91.53</text>
<text x="99.6" y="1123.0" font-size="18.3" fill="#1e1e1e" font-weight="normal" text-anchor="start" textLength="238.3" lengthAdjust="spacingAndGlyphs" >ГОСУДАРСТВЕННОЕ БЮД...</text>
<text x="494.8" y="1123.0" font-size="18.3" fill="#1e1e1e" font-weight="normal" text-anchor="end" textLength="55.7" lengthAdjust="spacingAndGlyphs" >105.39</text>
<text x="650.3" y="1123.0" font-size="18.3" fill="#1e1e1e" font-weight="normal" text-anchor="end" textLength="45.5" lengthAdjust="spacingAndGlyphs" >86.66</text>
<text x="805.8" y="1123.0" font-size="18.3" fill="#1e1e1e" font-weight="normal" text-anchor="end" textLength="45.5" lengthAdjust="spacingAndGlyphs" >89.45</text>
<text x="961.3" y="1123.0" font-size="18.3" fill="#1e1e1e" font-weight="normal" text-anchor="end" textLength="45.5" lengthAdjust="spacingAndGlyphs" >78.80</text>
<text x="100.2" y="205.0" font-size="17.5" fill="#222" font-weight="normal" text-anchor="start" textLength="108.7" lengthAdjust="spacingAndGlyphs"  stroke="#222" stroke-width="0.55">ДАТА месяц</text>
<text x="100.3" y="247.5" font-size="17.5" fill="#222" font-weight="normal" text-anchor="start" textLength="175.5" lengthAdjust="spacingAndGlyphs"  stroke="#222" stroke-width="0.55">Наименование МО</text>
<path d="M327.2,189.89999999999998 L340.8,189.89999999999998 Q342,190.1 341.2,191.7 L335.6,197.6 L335.6,203.39999999999998 Q334,205.39999999999998 332.4,203.39999999999998 L332.4,197.6 L326.8,191.7 Q326,190.1 327.2,189.89999999999998 Z" stroke="#5c5c5c" stroke-width="1.3" fill="none" stroke-linejoin="round"/>
<path d="M327.2,232.7 L340.8,232.7 Q342,232.9 341.2,234.5 L335.6,240.4 L335.6,246.2 Q334,248.2 332.4,246.2 L332.4,240.4 L326.8,234.5 Q326,232.9 327.2,232.7 Z" stroke="#5c5c5c" stroke-width="1.3" fill="none" stroke-linejoin="round"/>
<text x="363.9" y="204.0" font-size="17.5" fill="#222" font-weight="normal" text-anchor="start" textLength="65.7" lengthAdjust="spacingAndGlyphs" >Январь</text>
<text x="518.9" y="204.0" font-size="17.5" fill="#222" font-weight="normal" text-anchor="start" textLength="77.3" lengthAdjust="spacingAndGlyphs" >Февраль</text>
<text x="673.9" y="204.0" font-size="17.5" fill="#222" font-weight="normal" text-anchor="start" textLength="45.6" lengthAdjust="spacingAndGlyphs" >Март</text>
<text x="828.9" y="204.0" font-size="17.5" fill="#222" font-weight="normal" text-anchor="start" textLength="65.5" lengthAdjust="spacingAndGlyphs" >Апрель</text>
<text x="983.9" y="204.0" font-size="17.5" fill="#222" font-weight="normal" text-anchor="start" textLength="37.8" lengthAdjust="spacingAndGlyphs" >Май</text>
<text x="360.3" y="248.8" font-size="23.5" fill="#111" font-weight="normal" text-anchor="start" textLength="15.6" lengthAdjust="spacingAndGlyphs" >Σ</text>
<text x="384.1" y="248.4" font-size="19" fill="#111" font-style="italic" font-family="Liberation Serif" stroke="#111" stroke-width="0.45">f</text>
<text x="391.0" y="248.4" font-size="17.5" fill="#111" font-weight="normal" text-anchor="start" textLength="19.5" lengthAdjust="spacingAndGlyphs" font-style="italic" stroke="#111" stroke-width="0.35">(x)</text>
<text x="417.0" y="248.4" font-size="17.5" fill="#111" font-weight="normal" text-anchor="start" textLength="77.3" lengthAdjust="spacingAndGlyphs"  stroke="#111" stroke-width="0.55">% вып-...</text>
<text x="515.3" y="248.8" font-size="23.5" fill="#111" font-weight="normal" text-anchor="start" textLength="15.6" lengthAdjust="spacingAndGlyphs" >Σ</text>
<text x="539.1" y="248.4" font-size="19" fill="#111" font-style="italic" font-family="Liberation Serif" stroke="#111" stroke-width="0.45">f</text>
<text x="546.0" y="248.4" font-size="17.5" fill="#111" font-weight="normal" text-anchor="start" textLength="19.5" lengthAdjust="spacingAndGlyphs" font-style="italic" stroke="#111" stroke-width="0.35">(x)</text>
<text x="572.0" y="248.4" font-size="17.5" fill="#111" font-weight="normal" text-anchor="start" textLength="77.3" lengthAdjust="spacingAndGlyphs"  stroke="#111" stroke-width="0.55">% вып-...</text>
<text x="670.3" y="248.8" font-size="23.5" fill="#111" font-weight="normal" text-anchor="start" textLength="15.6" lengthAdjust="spacingAndGlyphs" >Σ</text>
<text x="694.1" y="248.4" font-size="19" fill="#111" font-style="italic" font-family="Liberation Serif" stroke="#111" stroke-width="0.45">f</text>
<text x="701.0" y="248.4" font-size="17.5" fill="#111" font-weight="normal" text-anchor="start" textLength="19.5" lengthAdjust="spacingAndGlyphs" font-style="italic" stroke="#111" stroke-width="0.35">(x)</text>
<text x="727.0" y="248.4" font-size="17.5" fill="#111" font-weight="normal" text-anchor="start" textLength="77.3" lengthAdjust="spacingAndGlyphs"  stroke="#111" stroke-width="0.55">% вып-...</text>
<text x="825.3" y="248.8" font-size="23.5" fill="#111" font-weight="normal" text-anchor="start" textLength="15.6" lengthAdjust="spacingAndGlyphs" >Σ</text>
<text x="849.1" y="248.4" font-size="19" fill="#111" font-style="italic" font-family="Liberation Serif" stroke="#111" stroke-width="0.45">f</text>
<text x="856.0" y="248.4" font-size="17.5" fill="#111" font-weight="normal" text-anchor="start" textLength="19.5" lengthAdjust="spacingAndGlyphs" font-style="italic" stroke="#111" stroke-width="0.35">(x)</text>
<text x="882.0" y="248.4" font-size="17.5" fill="#111" font-weight="normal" text-anchor="start" textLength="77.3" lengthAdjust="spacingAndGlyphs"  stroke="#111" stroke-width="0.55">% вып-...</text>
<text x="980.3" y="248.8" font-size="23.5" fill="#111" font-weight="normal" text-anchor="start" textLength="15.6" lengthAdjust="spacingAndGlyphs" >Σ</text>
<text x="1004.1" y="248.4" font-size="19" fill="#111" font-style="italic" font-family="Liberation Serif" stroke="#111" stroke-width="0.45">f</text>
<text x="1011.0" y="248.4" font-size="17.5" fill="#111" font-weight="normal" text-anchor="start" textLength="19.5" lengthAdjust="spacingAndGlyphs" font-style="italic" stroke="#111" stroke-width="0.35">(x)</text>
<text x="1037.0" y="248.4" font-size="17.5" fill="#111" font-weight="normal" text-anchor="start" textLength="14.5" lengthAdjust="spacingAndGlyphs"  stroke="#111" stroke-width="0.55">%</text>
<rect x="1048.2" y="259.5" width="5.6" height="572.5" fill="#c8cbd0"/>
<rect x="353" y="1111" width="244" height="6" fill="#c3c6ca"/>
<text x="1091.1" y="100.0" font-size="17" fill="#2a2a2a" font-weight="normal" text-anchor="start" textLength="549.0" lengthAdjust="spacingAndGlyphs" >% вып-я плана (Кол-во) по ДАТА месяц - мультисфера mee TFOMS....</text>
<g transform="translate(1660.5,87)" stroke="#2d2d2d" stroke-width="1.5" fill="none" stroke-linejoin="round" stroke-linecap="round">
<path d="M0.9,10.6 L11.5,0.2 L14.4,3.1 L3.8,13.6 L0.6,13.8 Z" stroke-width="1.7"/>
<path d="M8.6,13.9 L16.2,13.9" stroke-width="1.5"/>
</g>
<path d="M1748,98.8 L1760,98.8" stroke="#2d2d2d" stroke-width="2"/>
<path d="M1787.3,88 L1799.7,100.3 M1799.7,88 L1787.3,100.3" stroke="#2d2d2d" stroke-width="1.8"/>
<g transform="translate(1101.2,140) scale(1.0)" stroke="#111" fill="none" stroke-width="1.7" stroke-linecap="round" stroke-linejoin="round">
<path d="M1.7,6.3 Q5,1.5 12.8,0.4 M13.9,2.4 Q17,2.6 19.2,3.8 M0.6,10.9 Q0.8,17.5 6,22 M11,23.4 Q17.5,23 21.4,18 M22,11.3 L20.3,15.6"/>
<path d="M2.1,16.3 Q7,11 12.4,8.8 Q19,5.8 22.4,6.3 Q23,8.5 18.9,11.3"/>
<path d="M7.1,2.4 L14.2,10.2 L7.8,9.9 Z"/>
<path d="M3.1,17.7 L8.7,16.8 M2.4,9.1 L3.5,12.7 M7.8,19.1 L11.7,20.2 M13.5,19.1 L16,20.9 M9.2,12 L9.6,13.4"/>
</g>
<g transform="translate(1101.2,140) scale(1.0)" fill="#111">
<rect x="14.1" y="11.9" width="3" height="3" transform="rotate(40 15.6 13.4)"/>
<circle cx="11.7" cy="15.6" r="1.4"/><path d="M17.2,16.3 L19.5,17.8 L17.4,19.2 Z"/>
<circle cx="13.9" cy="4.5" r="0.8"/><circle cx="16" cy="6.6" r="1.1"/><circle cx="9.3" cy="6.8" r="0.7"/>
</g>
<path d="M1553,139.5 L1553,163.6 L1577,163.6" stroke="#2d2d2d" stroke-width="1.6" fill="none"/>
<path d="M1557,157 L1562.5,150.5 L1567.5,154.5 L1575,147" stroke="#2d2d2d" stroke-width="1.6" fill="none" stroke-linejoin="round"/>
<text x="1590.3" y="157.7" font-size="17" fill="#8a8a8a" font-weight="normal" text-anchor="start" textLength="106.5" lengthAdjust="spacingAndGlyphs" >Тип графика:</text>
<text x="1703.2" y="157.7" font-size="17" fill="#2a2a2a" font-weight="normal" text-anchor="start" textLength="55.7" lengthAdjust="spacingAndGlyphs"  stroke="#2a2a2a" stroke-width="0.55">Линии</text>
<path d="M1780.5,148 L1786.8,154.8 L1793.1,148" stroke="#4a4a4a" stroke-width="1.5" fill="none" stroke-linecap="round"/>
<text x="1102.0" y="219.6" font-size="38.5" fill="#141414" font-weight="normal" text-anchor="start" textLength="679.5" lengthAdjust="spacingAndGlyphs" >% выполнения плана (Количество) в...</text>
<path d="M1528.8,267 L1528.8,282.5 M1522.3,273.5 L1528.8,267 L1535.3,273.5" stroke="#2d2d2d" stroke-width="1.7" fill="none" stroke-linecap="round" stroke-linejoin="round"/>
<path d="M1518,283.5 L1518,288.8 Q1518,290 1519.5,290 L1538.2,290 Q1539.7,290 1539.7,288.8 L1539.7,283.5" stroke="#2d2d2d" stroke-width="2" fill="none" stroke-linecap="round"/>
<path d="M1572,272 L1567.5,276.5 L1572,281 M1567.5,276.5 L1583,276.5 Q1587.5,276.5 1587.5,280.3 Q1587.5,284 1583,284 L1580,284" stroke="#cfcfcf" stroke-width="1.6" fill="none" stroke-linecap="round" stroke-linejoin="round"/>
<circle cx="1625.5" cy="277.5" r="9.5" stroke="#cfcfcf" stroke-width="1.6" fill="none"/>
<rect x="1622.3" y="274.3" width="6.4" height="6.4" stroke="#cfcfcf" stroke-width="1.5" fill="none"/>
<path d="M1632.5,284.5 L1637.5,289.5" stroke="#cfcfcf" stroke-width="1.8" stroke-linecap="round"/>
<rect x="1663" y="266.5" width="4.3" height="23" stroke="#2d2d2d" stroke-width="1.6" fill="none"/>
<rect x="1670" y="266" width="17" height="5.4" fill="#2d2d2d"/>
<path d="M1682,284.5 L1682,276.5 M1679,279 L1682,275.8 L1685,279 M1682,284.5 L1673,284.5 M1676,281.5 L1673,284.5 L1676,287.5" stroke="#2d2d2d" stroke-width="1.6" fill="none" stroke-linejoin="round" stroke-linecap="round"/>
<path d="M1723.20,266.90 L1723.50,266.91 L1723.81,266.93 L1724.11,266.98 L1724.40,267.07 L1724.68,267.25 L1724.93,267.59 L1725.12,268.15 L1725.25,268.84 L1725.38,269.41 L1725.54,269.76 L1725.73,269.96 L1725.93,270.09 L1726.14,270.19 L1726.35,270.28 L1726.57,270.37 L1726.78,270.46 L1727.00,270.54 L1727.22,270.62 L1727.45,270.67 L1727.73,270.66 L1728.09,270.53 L1728.58,270.22 L1729.16,269.83 L1729.69,269.56 L1730.11,269.50 L1730.43,269.57 L1730.70,269.71 L1730.95,269.89 L1731.18,270.09 L1731.40,270.30 L1731.61,270.52 L1731.81,270.75 L1731.99,271.00 L1732.13,271.27 L1732.20,271.59 L1732.14,272.01 L1731.87,272.54 L1731.48,273.12 L1731.17,273.61 L1731.04,273.97 L1731.03,274.25 L1731.08,274.48 L1731.16,274.70 L1731.24,274.92 L1731.33,275.13 L1731.42,275.35 L1731.51,275.56 L1731.61,275.77 L1731.74,275.97 L1731.94,276.16 L1732.29,276.32 L1732.86,276.45 L1733.55,276.58 L1734.11,276.77 L1734.45,277.02 L1734.63,277.30 L1734.72,277.59 L1734.77,277.89 L1734.79,278.20 L1734.80,278.50 L1734.79,278.80 L1734.77,279.11 L1734.72,279.41 L1734.63,279.70 L1734.45,279.98 L1734.11,280.23 L1733.55,280.42 L1732.86,280.55 L1732.29,280.68 L1731.94,280.84 L1731.74,281.03 L1731.61,281.23 L1731.51,281.44 L1731.42,281.65 L1731.33,281.87 L1731.24,282.08 L1731.16,282.30 L1731.08,282.52 L1731.03,282.75 L1731.04,283.03 L1731.17,283.39 L1731.48,283.88 L1731.87,284.46 L1732.14,284.99 L1732.20,285.41 L1732.13,285.73 L1731.99,286.00 L1731.81,286.25 L1731.61,286.48 L1731.40,286.70 L1731.18,286.91 L1730.95,287.11 L1730.70,287.29 L1730.43,287.43 L1730.11,287.50 L1729.69,287.44 L1729.16,287.17 L1728.58,286.78 L1728.09,286.47 L1727.73,286.34 L1727.45,286.33 L1727.22,286.38 L1727.00,286.46 L1726.78,286.54 L1726.57,286.63 L1726.35,286.72 L1726.14,286.81 L1725.93,286.91 L1725.73,287.04 L1725.54,287.24 L1725.38,287.59 L1725.25,288.16 L1725.12,288.85 L1724.93,289.41 L1724.68,289.75 L1724.40,289.93 L1724.11,290.02 L1723.81,290.07 L1723.50,290.09 L1723.20,290.10 L1722.90,290.09 L1722.59,290.07 L1722.29,290.02 L1722.00,289.93 L1721.72,289.75 L1721.47,289.41 L1721.28,288.85 L1721.15,288.16 L1721.02,287.59 L1720.86,287.24 L1720.67,287.04 L1720.47,286.91 L1720.26,286.81 L1720.05,286.72 L1719.83,286.63 L1719.62,286.54 L1719.40,286.46 L1719.18,286.38 L1718.95,286.33 L1718.67,286.34 L1718.31,286.47 L1717.82,286.78 L1717.24,287.17 L1716.71,287.44 L1716.29,287.50 L1715.97,287.43 L1715.70,287.29 L1715.45,287.11 L1715.22,286.91 L1715.00,286.70 L1714.79,286.48 L1714.59,286.25 L1714.41,286.00 L1714.27,285.73 L1714.20,285.41 L1714.26,284.99 L1714.53,284.46 L1714.92,283.88 L1715.23,283.39 L1715.36,283.03 L1715.37,282.75 L1715.32,282.52 L1715.24,282.30 L1715.16,282.08 L1715.07,281.87 L1714.98,281.65 L1714.89,281.44 L1714.79,281.23 L1714.66,281.03 L1714.46,280.84 L1714.11,280.68 L1713.54,280.55 L1712.85,280.42 L1712.29,280.23 L1711.95,279.98 L1711.77,279.70 L1711.68,279.41 L1711.63,279.11 L1711.61,278.80 L1711.60,278.50 L1711.61,278.20 L1711.63,277.89 L1711.68,277.59 L1711.77,277.30 L1711.95,277.02 L1712.29,276.77 L1712.85,276.58 L1713.54,276.45 L1714.11,276.32 L1714.46,276.16 L1714.66,275.97 L1714.79,275.77 L1714.89,275.56 L1714.98,275.35 L1715.07,275.13 L1715.16,274.92 L1715.24,274.70 L1715.32,274.48 L1715.37,274.25 L1715.36,273.97 L1715.23,273.61 L1714.92,273.12 L1714.53,272.54 L1714.26,272.01 L1714.20,271.59 L1714.27,271.27 L1714.41,271.00 L1714.59,270.75 L1714.79,270.52 L1715.00,270.30 L1715.22,270.09 L1715.45,269.89 L1715.70,269.71 L1715.97,269.57 L1716.29,269.50 L1716.71,269.56 L1717.24,269.83 L1717.82,270.22 L1718.31,270.53 L1718.67,270.66 L1718.95,270.67 L1719.18,270.62 L1719.40,270.54 L1719.62,270.46 L1719.83,270.37 L1720.05,270.28 L1720.26,270.19 L1720.47,270.09 L1720.67,269.96 L1720.86,269.76 L1721.02,269.41 L1721.15,268.84 L1721.28,268.15 L1721.47,267.59 L1721.72,267.25 L1722.00,267.07 L1722.29,266.98 L1722.59,266.93 L1722.90,266.91 Z" stroke="#2d2d2d" stroke-width="1.7" fill="none" stroke-linejoin="round"/>
<circle cx="1723.2" cy="278.5" r="3.7" stroke="#2d2d2d" stroke-width="1.7" fill="none"/>
<circle cx="1764" cy="271.5" r="2" stroke="#2d2d2d" stroke-width="1.5" fill="none"/>
<path d="M1769,271.5 L1783,271.5" stroke="#2d2d2d" stroke-width="1.8"/>
<circle cx="1764" cy="279" r="2" stroke="#2d2d2d" stroke-width="1.5" fill="none"/>
<path d="M1769,279 L1783,279" stroke="#2d2d2d" stroke-width="1.8"/>
<circle cx="1764" cy="286.7" r="2" stroke="#2d2d2d" stroke-width="1.5" fill="none"/>
<path d="M1769,286.7 L1783,286.7" stroke="#2d2d2d" stroke-width="1.8"/>
<g>
<path d="M1163.5,956.2 L1793,956.2" stroke="#e8e8f0" stroke-width="1.25"/>
<path d="M1163.5,881.7 L1793,881.7" stroke="#e8e8f0" stroke-width="1.25"/>
<path d="M1163.5,807.3 L1793,807.3" stroke="#e8e8f0" stroke-width="1.25"/>
<path d="M1163.5,732.8 L1793,732.8" stroke="#e8e8f0" stroke-width="1.25"/>
<path d="M1163.5,658.4 L1793,658.4" stroke="#e8e8f0" stroke-width="1.25"/>
<path d="M1163.5,583.9 L1793,583.9" stroke="#e8e8f0" stroke-width="1.25"/>
<path d="M1163.5,509.4 L1793,509.4" stroke="#e8e8f0" stroke-width="1.25"/>
<path d="M1163.5,435.0 L1793,435.0" stroke="#e8e8f0" stroke-width="1.25"/>
<path d="M1163.5,360.5 L1793,360.5" stroke="#e8e8f0" stroke-width="1.25"/>
<path d="M1201.5,347.5 L1201.5,993.7" stroke="#e8e8f0" stroke-width="1.25"/>
<path d="M1252.8,347.5 L1252.8,993.7" stroke="#e8e8f0" stroke-width="1.25"/>
<path d="M1304.2,347.5 L1304.2,993.7" stroke="#e8e8f0" stroke-width="1.25"/>
<path d="M1355.5,347.5 L1355.5,993.7" stroke="#e8e8f0" stroke-width="1.25"/>
<path d="M1406.9,347.5 L1406.9,993.7" stroke="#e8e8f0" stroke-width="1.25"/>
<path d="M1458.2,347.5 L1458.2,993.7" stroke="#e8e8f0" stroke-width="1.25"/>
<path d="M1509.6,347.5 L1509.6,993.7" stroke="#e8e8f0" stroke-width="1.25"/>
<path d="M1561.0,347.5 L1561.0,993.7" stroke="#e8e8f0" stroke-width="1.25"/>
<path d="M1612.3,347.5 L1612.3,993.7" stroke="#e8e8f0" stroke-width="1.25"/>
<path d="M1663.7,347.5 L1663.7,993.7" stroke="#e8e8f0" stroke-width="1.25"/>
<path d="M1715.0,347.5 L1715.0,993.7" stroke="#e8e8f0" stroke-width="1.25"/>
<path d="M1766.3,347.5 L1766.3,993.7" stroke="#e8e8f0" stroke-width="1.25"/>
<path d="M1163.5,347.8 L1173.2,347.8 L1173.2,993.7" stroke="#e1e2ea" stroke-width="1.6" fill="none"/>
<path d="M1163.5,985.2 L1793,985.2" stroke="#e1e2ea" stroke-width="1.6"/>
</g>
<text x="1158.6" y="961.1" font-size="16" fill="#333" font-weight="normal" text-anchor="end" textLength="21.6" lengthAdjust="spacingAndGlyphs" >0.0</text>
<text x="1158.6" y="886.6" font-size="16" fill="#333" font-weight="normal" text-anchor="end" textLength="17.3" lengthAdjust="spacingAndGlyphs" >10</text>
<text x="1158.6" y="812.2" font-size="16" fill="#333" font-weight="normal" text-anchor="end" textLength="17.3" lengthAdjust="spacingAndGlyphs" >20</text>
<text x="1158.6" y="737.7" font-size="16" fill="#333" font-weight="normal" text-anchor="end" textLength="17.3" lengthAdjust="spacingAndGlyphs" >30</text>
<text x="1158.6" y="663.3" font-size="16" fill="#333" font-weight="normal" text-anchor="end" textLength="17.3" lengthAdjust="spacingAndGlyphs" >40</text>
<text x="1158.6" y="588.8" font-size="16" fill="#333" font-weight="normal" text-anchor="end" textLength="17.3" lengthAdjust="spacingAndGlyphs" >50</text>
<text x="1158.6" y="514.3" font-size="16" fill="#333" font-weight="normal" text-anchor="end" textLength="17.3" lengthAdjust="spacingAndGlyphs" >60</text>
<text x="1158.6" y="439.9" font-size="16" fill="#333" font-weight="normal" text-anchor="end" textLength="17.3" lengthAdjust="spacingAndGlyphs" >70</text>
<text x="1158.6" y="365.4" font-size="16" fill="#333" font-weight="normal" text-anchor="end" textLength="17.3" lengthAdjust="spacingAndGlyphs" >80</text>
<g clip-path="url(#plotclip)">
<path d="M1200.70,414.77 C1200.70,414.77 1231.51,517.75 1252.05,517.75 C1272.59,517.75 1282.86,468.68 1303.40,468.68 C1323.94,468.68 1334.21,563.62 1354.75,563.62 C1375.29,563.62 1385.56,535.02 1406.10,535.02 C1426.64,535.02 1436.91,607.40 1457.45,607.40 C1477.99,607.40 1488.26,602.49 1508.80,602.49 C1529.34,602.49 1539.61,602.49 1560.15,627.58 C1580.69,652.67 1590.96,704.81 1611.50,770.39 C1632.04,835.98 1642.31,955.50 1662.85,955.50 C1683.39,955.50 1693.66,955.50 1714.20,955.50 C1734.74,955.50 1765.55,955.50 1765.55,955.50" stroke="#50aed4" stroke-width="4.4" fill="none" stroke-linecap="round" stroke-linejoin="round"/>
<path d="M1200.70,375.83 C1200.70,375.83 1231.51,423.78 1252.05,425.34 C1272.59,426.91 1282.86,425.34 1303.40,426.91 C1323.94,428.47 1334.21,488.11 1354.75,488.11 C1375.29,488.11 1385.56,456.99 1406.10,456.99 C1426.64,456.99 1436.91,955.50 1457.45,955.50 C1477.99,955.50 1488.26,530.93 1508.80,505.76 C1529.34,480.59 1539.61,487.28 1560.15,480.59 C1580.69,473.91 1590.96,480.59 1611.50,472.33 C1632.04,464.06 1642.31,424.08 1662.85,424.08 C1683.39,424.08 1693.66,427.73 1714.20,427.73 C1734.74,427.73 1765.55,421.32 1765.55,421.32" stroke="#b43bb2" stroke-width="4.4" fill="none" stroke-linecap="round" stroke-linejoin="round"/>
<circle cx="1200.70" cy="414.77" r="7.1" fill="#50aed4" stroke="#ffffff" stroke-width="1"/>
<circle cx="1252.05" cy="517.75" r="7.1" fill="#50aed4" stroke="#ffffff" stroke-width="1"/>
<circle cx="1303.40" cy="468.68" r="7.1" fill="#50aed4" stroke="#ffffff" stroke-width="1"/>
<circle cx="1354.75" cy="563.62" r="7.1" fill="#50aed4" stroke="#ffffff" stroke-width="1"/>
<circle cx="1406.10" cy="535.02" r="7.1" fill="#50aed4" stroke="#ffffff" stroke-width="1"/>
<circle cx="1457.45" cy="607.40" r="7.1" fill="#50aed4" stroke="#ffffff" stroke-width="1"/>
<circle cx="1508.80" cy="602.49" r="7.1" fill="#50aed4" stroke="#ffffff" stroke-width="1"/>
<circle cx="1560.15" cy="627.58" r="7.1" fill="#50aed4" stroke="#ffffff" stroke-width="1"/>
<circle cx="1611.50" cy="770.39" r="7.1" fill="#50aed4" stroke="#ffffff" stroke-width="1"/>
<circle cx="1662.85" cy="955.50" r="7.1" fill="#50aed4" stroke="#ffffff" stroke-width="1"/>
<circle cx="1714.20" cy="955.50" r="7.1" fill="#50aed4" stroke="#ffffff" stroke-width="1"/>
<circle cx="1765.55" cy="955.50" r="7.1" fill="#50aed4" stroke="#ffffff" stroke-width="1"/>
<circle cx="1200.70" cy="375.83" r="7.1" fill="#b43bb2" stroke="#ffffff" stroke-width="1"/>
<circle cx="1252.05" cy="425.34" r="7.1" fill="#b43bb2" stroke="#ffffff" stroke-width="1"/>
<circle cx="1303.40" cy="426.91" r="7.1" fill="#b43bb2" stroke="#ffffff" stroke-width="1"/>
<circle cx="1354.75" cy="488.11" r="7.1" fill="#b43bb2" stroke="#ffffff" stroke-width="1"/>
<circle cx="1406.10" cy="456.99" r="7.1" fill="#b43bb2" stroke="#ffffff" stroke-width="1"/>
<circle cx="1457.45" cy="955.50" r="7.1" fill="#b43bb2" stroke="#ffffff" stroke-width="1"/>
<circle cx="1508.80" cy="505.76" r="7.1" fill="#b43bb2" stroke="#ffffff" stroke-width="1"/>
<circle cx="1560.15" cy="480.59" r="7.1" fill="#b43bb2" stroke="#ffffff" stroke-width="1"/>
<circle cx="1611.50" cy="472.33" r="7.1" fill="#b43bb2" stroke="#ffffff" stroke-width="1"/>
<circle cx="1662.85" cy="424.08" r="7.1" fill="#b43bb2" stroke="#ffffff" stroke-width="1"/>
<circle cx="1714.20" cy="427.73" r="7.1" fill="#b43bb2" stroke="#ffffff" stroke-width="1"/>
<circle cx="1765.55" cy="421.32" r="7.1" fill="#b43bb2" stroke="#ffffff" stroke-width="1"/>
<text x="1215.7" y="415.2" font-size="16.6" fill="#111" stroke="#fff" stroke-width="2" paint-order="stroke" stroke-linejoin="round" textLength="39.7" lengthAdjust="spacingAndGlyphs">72.62</text>
<text x="1267.0" y="518.1" font-size="16.6" fill="#111" stroke="#fff" stroke-width="2" paint-order="stroke" stroke-linejoin="round" textLength="39.7" lengthAdjust="spacingAndGlyphs">58.79</text>
<text x="1318.4" y="469.1" font-size="16.6" fill="#111" stroke="#fff" stroke-width="2" paint-order="stroke" stroke-linejoin="round" textLength="39.7" lengthAdjust="spacingAndGlyphs">65.38</text>
<text x="1369.8" y="564.0" font-size="16.6" fill="#111" stroke="#fff" stroke-width="2" paint-order="stroke" stroke-linejoin="round" textLength="39.7" lengthAdjust="spacingAndGlyphs">52.63</text>
<text x="1421.1" y="535.4" font-size="16.6" fill="#111" stroke="#fff" stroke-width="2" paint-order="stroke" stroke-linejoin="round" textLength="39.7" lengthAdjust="spacingAndGlyphs">56.47</text>
<text x="1472.5" y="607.8" font-size="16.6" fill="#111" stroke="#fff" stroke-width="2" paint-order="stroke" stroke-linejoin="round" textLength="39.7" lengthAdjust="spacingAndGlyphs">46.75</text>
<text x="1523.8" y="602.9" font-size="16.6" fill="#111" stroke="#fff" stroke-width="2" paint-order="stroke" stroke-linejoin="round" textLength="39.7" lengthAdjust="spacingAndGlyphs">47.41</text>
<text x="1575.2" y="628.0" font-size="16.6" fill="#111" stroke="#fff" stroke-width="2" paint-order="stroke" stroke-linejoin="round" textLength="39.7" lengthAdjust="spacingAndGlyphs">44.04</text>
<text x="1626.5" y="770.8" font-size="16.6" fill="#111" stroke="#fff" stroke-width="2" paint-order="stroke" stroke-linejoin="round" textLength="39.7" lengthAdjust="spacingAndGlyphs">24.86</text>
<text x="1215.7" y="376.2" font-size="16.6" fill="#111" stroke="#fff" stroke-width="2" paint-order="stroke" stroke-linejoin="round" textLength="39.7" lengthAdjust="spacingAndGlyphs">77.85</text>
<text x="1267.0" y="425.7" font-size="16.6" fill="#111" stroke="#fff" stroke-width="2" paint-order="stroke" stroke-linejoin="round" textLength="39.7" lengthAdjust="spacingAndGlyphs">71.20</text>
<text x="1318.4" y="427.3" font-size="16.6" fill="#111" stroke="#fff" stroke-width="2" paint-order="stroke" stroke-linejoin="round" textLength="39.7" lengthAdjust="spacingAndGlyphs">70.99</text>
<text x="1369.8" y="488.5" font-size="16.6" fill="#111" stroke="#fff" stroke-width="2" paint-order="stroke" stroke-linejoin="round" textLength="39.7" lengthAdjust="spacingAndGlyphs">62.77</text>
<text x="1421.1" y="457.4" font-size="16.6" fill="#111" stroke="#fff" stroke-width="2" paint-order="stroke" stroke-linejoin="round" textLength="39.7" lengthAdjust="spacingAndGlyphs">66.95</text>
<text x="1523.8" y="506.2" font-size="16.6" fill="#111" stroke="#fff" stroke-width="2" paint-order="stroke" stroke-linejoin="round" textLength="39.7" lengthAdjust="spacingAndGlyphs">60.40</text>
<text x="1575.2" y="481.0" font-size="16.6" fill="#111" stroke="#fff" stroke-width="2" paint-order="stroke" stroke-linejoin="round" textLength="39.7" lengthAdjust="spacingAndGlyphs">63.78</text>
<text x="1626.5" y="472.7" font-size="16.6" fill="#111" stroke="#fff" stroke-width="2" paint-order="stroke" stroke-linejoin="round" textLength="39.7" lengthAdjust="spacingAndGlyphs">64.89</text>
<text x="1677.9" y="424.5" font-size="16.6" fill="#111" stroke="#fff" stroke-width="2" paint-order="stroke" stroke-linejoin="round" textLength="39.7" lengthAdjust="spacingAndGlyphs">71.37</text>
<text x="1729.2" y="428.1" font-size="16.6" fill="#111" stroke="#fff" stroke-width="2" paint-order="stroke" stroke-linejoin="round" textLength="39.7" lengthAdjust="spacingAndGlyphs">70.88</text>
<text x="1780.5" y="421.7" font-size="16.6" fill="#111" stroke="#fff" stroke-width="2" paint-order="stroke" stroke-linejoin="round" textLength="39.7" lengthAdjust="spacingAndGlyphs">71.74</text>
</g>
<g clip-path="url(#xlabclip)"><text transform="translate(1190.2,1006.5) rotate(45)" font-size="15.8" fill="#333">Январь</text></g>
<g clip-path="url(#xlabclip)"><text transform="translate(1241.5,1006.5) rotate(45)" font-size="15.8" fill="#333">Февраль</text></g>
<g clip-path="url(#xlabclip)"><text transform="translate(1292.9,1006.5) rotate(45)" font-size="15.8" fill="#333">Март</text></g>
<g clip-path="url(#xlabclip)"><text transform="translate(1344.2,1006.5) rotate(45)" font-size="15.8" fill="#333">Апрель</text></g>
<g clip-path="url(#xlabclip)"><text transform="translate(1395.6,1006.5) rotate(45)" font-size="15.8" fill="#333">Май</text></g>
<g clip-path="url(#xlabclip)"><text transform="translate(1447.0,1006.5) rotate(45)" font-size="15.8" fill="#333">Июнь</text></g>
<g clip-path="url(#xlabclip)"><text transform="translate(1498.3,1006.5) rotate(45)" font-size="15.8" fill="#333">Июль</text></g>
<g clip-path="url(#xlabclip)"><text transform="translate(1549.7,1006.5) rotate(45)" font-size="15.8" fill="#333">Август</text></g>
<g clip-path="url(#xlabclip)"><text transform="translate(1601.0,1006.5) rotate(45)" font-size="15.8" fill="#333">Сентябрь</text></g>
<g clip-path="url(#xlabclip)"><text transform="translate(1652.4,1006.5) rotate(45)" font-size="15.8" fill="#333">Октябрь</text></g>
<g clip-path="url(#xlabclip)"><text transform="translate(1703.7,1006.5) rotate(45)" font-size="15.8" fill="#333">Ноябрь</text></g>
<g clip-path="url(#xlabclip)"><text transform="translate(1755.0,1006.5) rotate(45)" font-size="15.8" fill="#333">Декабрь</text></g>
<text x="1430.7" y="1090.8" font-size="18.5" fill="#8a8f92" font-weight="normal" text-anchor="start" textLength="104.2" lengthAdjust="spacingAndGlyphs" >ДАТА месяц</text>
<text transform="translate(1117.8,767.5) rotate(-90)" font-size="16.8" fill="#8a8f92" textLength="204.4" lengthAdjust="spacingAndGlyphs">% вып-я плана (Кол-во)</text>
<rect x="71" y="1062" width="1769" height="58" fill="url(#botfade)"/>
</svg>
</body></html>
